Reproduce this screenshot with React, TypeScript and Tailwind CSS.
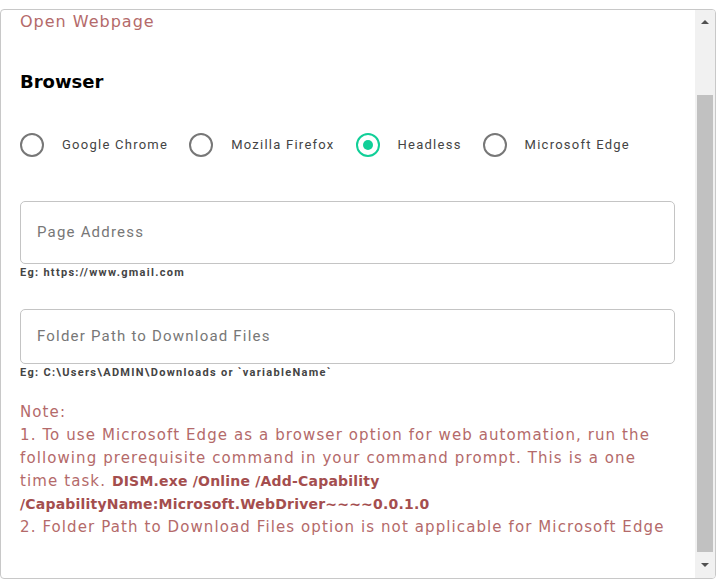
import React from 'react';

const options = ['Google Chrome', 'Mozilla Firefox', 'Headless', 'Microsoft Edge'];

const Radio: React.FC<{ label: string; checked?: boolean }> = ({ label, checked }) => (
  <div className="flex items-center">
    <div
      className={
        checked
          ? 'w-[24px] h-[24px] rounded-full border-[2.5px] border-[#11cf98] flex items-center justify-center'
          : 'w-[24px] h-[24px] rounded-full border-[2.5px] border-[#777777]'
      }
    >
      {checked && <div className="w-[10px] h-[10px] rounded-full bg-[#11cf98]" />}
    </div>
    <span className="ml-[18px] text-[13px] tracking-[1.25px] text-[#444]" style={{ fontFamily: 'Roboto, sans-serif' }}>
      {label}
    </span>
  </div>
);

const App: React.FC = () => {
  return (
    <div className="w-[719px] h-[579px] bg-white pt-[9px]">
      <div className="flex w-[716px] h-[570px] border border-[#c8c8c8] rounded-[4px] overflow-hidden">
        {/* Content */}
        <div className="flex-1 pl-[19px] pr-[20px]" style={{ fontFamily: '"DejaVu Sans", sans-serif' }}>
          <div className="text-[16px] leading-[24px] tracking-[1px] text-[#b46a6a]">Open Webpage</div>

          <div className="mt-[34px] text-[18px] leading-[28px] font-semibold text-black">Browser</div>

          <div className="mt-[37px] flex items-center gap-[21px]">
            {options.map((o) => (
              <Radio key={o} label={o} checked={o === 'Headless'} />
            ))}
          </div>

          <div style={{ fontFamily: 'Roboto, sans-serif' }}>
            <div className="mt-[44px] h-[63px] border border-[#c4c4c4] rounded-[5px] flex items-center pl-[16px]">
              <span className="text-[15px] tracking-[1.2px] text-[#777]">Page Address</span>
            </div>
            <div className="mt-[2px] text-[11px] leading-[14px] font-bold tracking-[1.3px] text-[#444]">
              Eg: https://www.gmail.com
            </div>

            <div className="mt-[29px] h-[55px] border border-[#c4c4c4] rounded-[5px] flex items-center pl-[16px]">
              <span className="text-[15px] tracking-[1.2px] text-[#777]">Folder Path to Download Files</span>
            </div>
            <div className="mt-[2px] text-[11px] leading-[14px] font-bold tracking-[1.3px] text-[#444]">
              Eg: C:\Users\ADMIN\Downloads or `variableName`
            </div>
          </div>

          <div className="mt-[21px] text-[15px] leading-[23px] tracking-[1.1px] text-[#b46a6a] whitespace-nowrap">
            <div>Note:</div>
            <div>
              1. To use Microsoft Edge as a browser option for web automation, run the
              <br />
              following prerequisite command in your command prompt. This is a one
              <br />
              time task.{' '}
              <span className="font-bold text-[14px] tracking-[0.2px] text-[#a44e4e]">
                DISM.exe /Online /Add-Capability
                <br />
                /CapabilityName:Microsoft.WebDriver~~~~0.0.1.0
              </span>
            </div>
            <div>2. Folder Path to Download Files option is not applicable for Microsoft Edge</div>
          </div>
        </div>

        {/* Scrollbar */}
        <div className="w-[20px] bg-[#f1f1f1] flex flex-col items-center">
          <div className="h-[24px] w-full flex items-center justify-center">
            <div className="w-0 h-0 border-l-[4px] border-r-[4px] border-b-[4px] border-l-transparent border-r-transparent border-b-[#505050]" />
          </div>
          <div className="mt-[61px] w-[16px] h-[457px] bg-[#c1c1c1]" />
          <div className="flex-1 w-full flex items-center justify-center">
            <div className="w-0 h-0 border-l-[4px] border-r-[4px] border-t-[4px] border-l-transparent border-r-transparent border-t-[#505050]" />
          </div>
        </div>
      </div>
    </div>
  );
};

export default App;
